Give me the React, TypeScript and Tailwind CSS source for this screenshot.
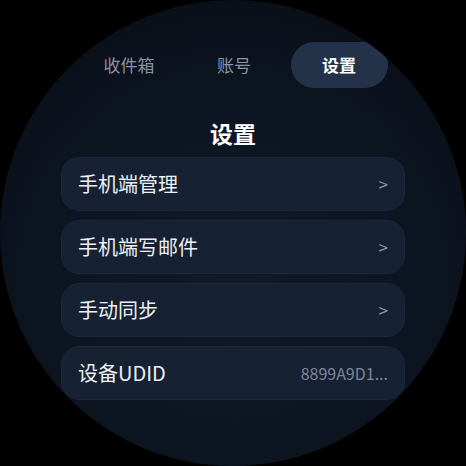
import React from "react";

const tabs = [
  { label: "收件箱", active: false },
  { label: "账号", active: false },
  { label: "设置", active: true },
];

const rows = [
  { label: "手机端管理", value: null },
  { label: "手机端写邮件", value: null },
  { label: "手动同步", value: null },
  { label: "设备UDID", value: "8899A9D1..." },
];

export default function App() {
  return (
    <div
      className="w-[466px] h-[466px] bg-black"
      style={{ fontFamily: '"Noto Sans CJK SC", "Noto Sans", sans-serif' }}
    >
      <div className="w-[466px] h-[466px] rounded-full overflow-hidden bg-[radial-gradient(circle_at_50%_60%,#101a29_0%,#0c1420_55%,#070b12_100%)] flex flex-col items-center">
        <div className="mt-[42px] flex gap-2 pl-[2px]">
          {tabs.map((t) => (
            <div
              key={t.label}
              className={
                t.active
                  ? "w-[97px] h-[46px] rounded-full bg-[#233249] flex items-center justify-center text-[17px] font-bold text-white"
                  : "w-[97px] h-[46px] flex items-center justify-center text-[17px] text-[#8a93a3]"
              }
            >
              {t.label}
            </div>
          ))}
        </div>

        <h1 className="mt-[30px] text-[23px] leading-[30px] font-bold text-white">
          设置
        </h1>

        <div className="mt-[9px] w-[344px] flex flex-col gap-[9px]">
          {rows.map((r) => (
            <div
              key={r.label}
              className="h-[54px] rounded-[18px] bg-[#162133] border border-[#1b2739] flex items-center justify-between pl-[16px] pr-[16px]"
            >
              <span className="text-[20px] text-[#eef1f5]">{r.label}</span>
              {r.value ? (
                <span className="text-[16px] text-[#7d8797]">{r.value}</span>
              ) : (
                <span className="text-[17px] text-[#8a93a3]">&gt;</span>
              )}
            </div>
          ))}
        </div>
      </div>
    </div>
  );
}
